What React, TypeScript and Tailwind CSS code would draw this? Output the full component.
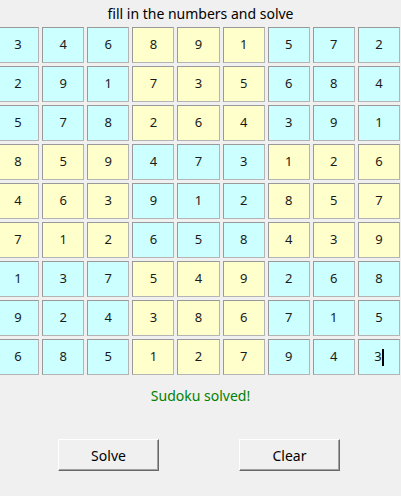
const board = [
  [3, 4, 6, 8, 9, 1, 5, 7, 2],
  [2, 9, 1, 7, 3, 5, 6, 8, 4],
  [5, 7, 8, 2, 6, 4, 3, 9, 1],
  [8, 5, 9, 4, 7, 3, 1, 2, 6],
  [4, 6, 3, 9, 1, 2, 8, 5, 7],
  [7, 1, 2, 6, 5, 8, 4, 3, 9],
  [1, 3, 7, 5, 4, 9, 2, 6, 8],
  [9, 2, 4, 3, 8, 6, 7, 1, 5],
  [6, 8, 5, 1, 2, 7, 9, 4, 3],
];

function Cell({ value, row, col }: { value: number; row: number; col: number }) {
  // boxes alternate cyan / yellow like a checkerboard
  const box = Math.floor(row / 3) + Math.floor(col / 3);
  const bg = box % 2 === 0 ? 'bg-[#ccffff]' : 'bg-[#ffffcc]';
  const last = row === 8 && col === 8;

  return (
    <div
      className={`${bg} h-[36px] flex items-center justify-center border border-[#b4b4b4] border-t-[#999999] border-l-[#999999] text-[13px] text-[#1a1a1a]`}
    >
      <span>{value}</span>
      {last && <span className="w-[2px] h-[17px] bg-black" />}
    </div>
  );
}

function TkButton({ label }: { label: string }) {
  return (
    <button className="w-[101px] h-[32px] bg-[#f0f0f0] border border-t-white border-l-white border-r-[#696969] border-b-[#696969] shadow-[inset_-1px_-1px_0_#a0a0a0] text-[14px] text-black">
      {label}
    </button>
  );
}

export default function App() {
  return (
    <div
      className="w-[401px] h-[496px] bg-[#f0f0f0] overflow-hidden flex flex-col"
      style={{ fontFamily: '"Noto Sans", "Open Sans", sans-serif' }}
    >
      <div className="h-[27px] flex items-center justify-center text-[14px] text-black">
        fill in the numbers and solve
      </div>

      <div className="grid grid-cols-9 gap-x-[3px] gap-y-[3px] w-[403px] ml-[-3px]">
        {board.map((r, ri) =>
          r.map((v, ci) => <Cell key={`${ri}-${ci}`} value={v} row={ri} col={ci} />)
        )}
      </div>

      <div className="mt-[10px] h-[20px] flex items-center justify-center text-[14px] text-[#008000]">
        Sudoku solved!
      </div>

      <div className="mt-[34px] flex">
        <div className="ml-[58px]">
          <TkButton label="Solve" />
        </div>
        <div className="ml-[80px]">
          <TkButton label="Clear" />
        </div>
      </div>
    </div>
  );
}
